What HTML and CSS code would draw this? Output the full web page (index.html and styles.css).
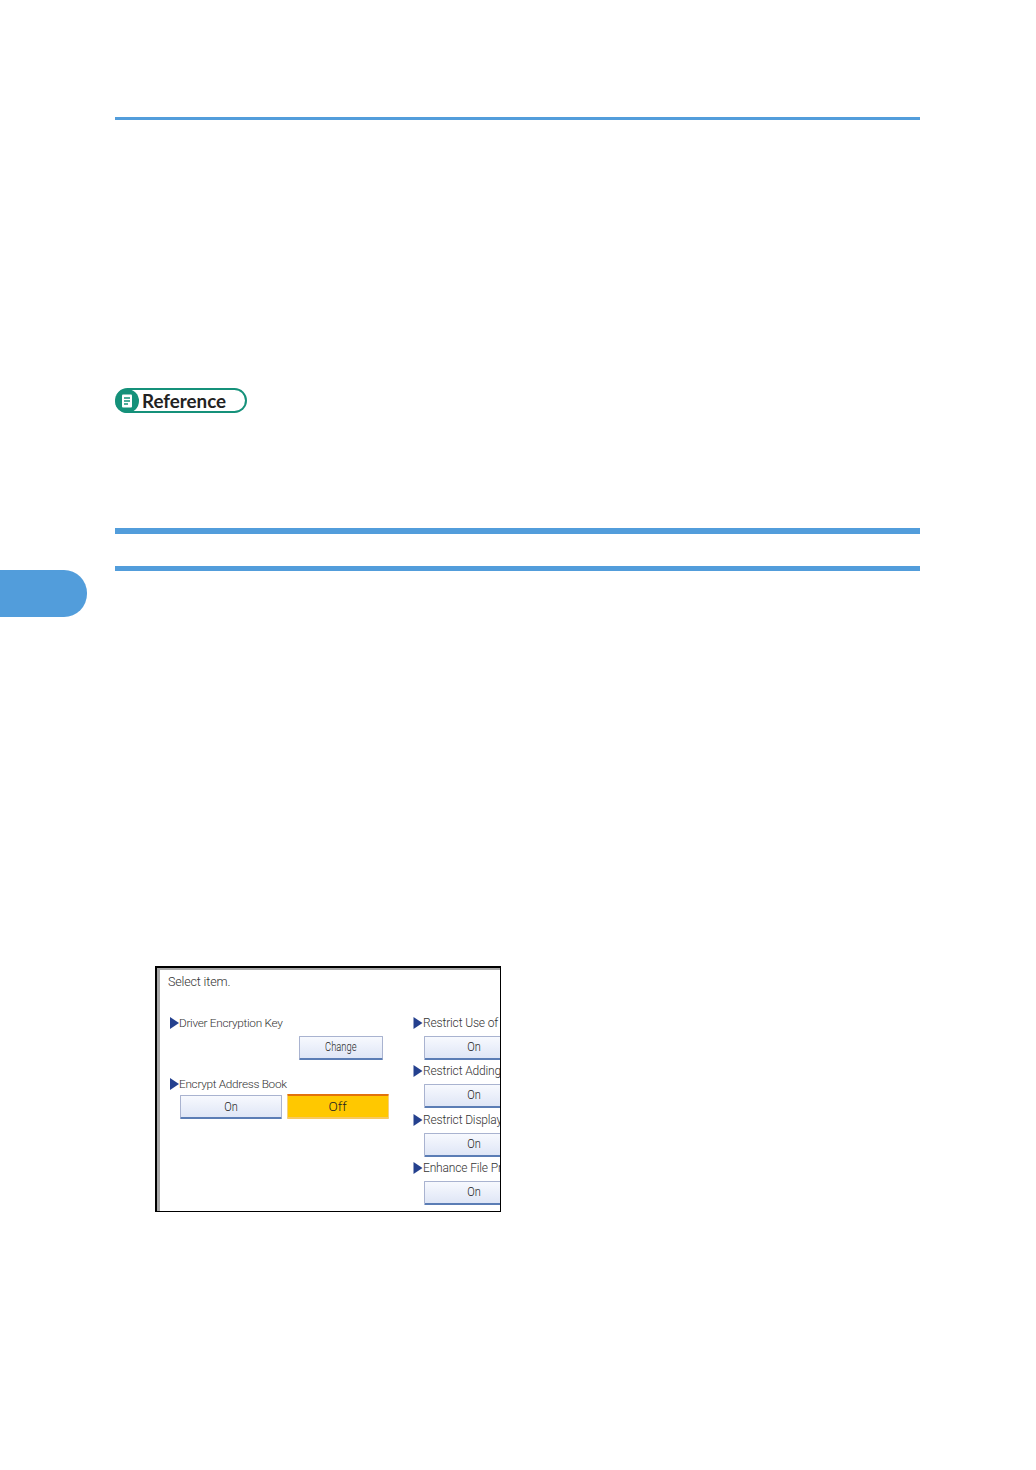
FILE: index.html
```html
<!DOCTYPE html>
<html lang="en">
<head>
<meta charset="utf-8">
<title>Reference</title>
<link rel="stylesheet" href="styles.css">
</head>
<body>
<div class="side-tab"></div>
<main class="page">
  <div class="rule-top"></div>
  <div class="reference">
    <span class="ref-icon">
      <svg viewBox="0 0 24 24" width="24" height="24"><circle cx="12" cy="12" r="12" fill="#15917a"/><rect x="7" y="5.5" width="10" height="13" rx="1" fill="#fff"/><path d="M9 9h6M9 12h6M9 15h4" stroke="#15917a" stroke-width="1.6"/></svg>
    </span>
    <span class="ref-text">Reference</span>
  </div>
  <div class="section-head"></div>
  <div class="screen">
    <div class="col-left">
      <div class="title">Select item.</div>
      <div class="label">
        <svg class="arrow" viewBox="0 0 9 12" width="9" height="12"><path d="M0 0L9 6L0 12Z"/></svg>Driver Encryption Key
      </div>
      <div class="row-end"><button class="btn btn-change"><span class="cap cap-narrow">Change</span></button></div>
      <div class="label label-encrypt">
        <svg class="arrow" viewBox="0 0 9 12" width="9" height="12"><path d="M0 0L9 6L0 12Z"/></svg>Encrypt Address Book
      </div>
      <div class="pair">
        <button class="btn btn-half"><span class="cap">On</span></button>
        <button class="btn btn-half btn-active"><span class="cap cap-wide">Off</span></button>
      </div>
    </div>
    <div class="col-right">
      <div class="label"><svg class="arrow" viewBox="0 0 9 12" width="10" height="12"><path d="M0 0L9 6L0 12Z"/></svg>Restrict Use of</div>
      <button class="btn btn-clip"><span class="cap">On</span></button>
      <div class="label"><svg class="arrow" viewBox="0 0 9 12" width="10" height="12"><path d="M0 0L9 6L0 12Z"/></svg>Restrict Adding</div>
      <button class="btn btn-clip"><span class="cap">On</span></button>
      <div class="label"><svg class="arrow" viewBox="0 0 9 12" width="10" height="12"><path d="M0 0L9 6L0 12Z"/></svg>Restrict Display</div>
      <button class="btn btn-clip"><span class="cap">On</span></button>
      <div class="label"><svg class="arrow" viewBox="0 0 9 12" width="10" height="12"><path d="M0 0L9 6L0 12Z"/></svg>Enhance File Pro</div>
      <button class="btn btn-clip"><span class="cap">On</span></button>
    </div>
  </div>
</main>
</body>
</html>
```
FILE: styles.css
```css
html, body {
  margin: 0;
  padding: 0;
  background: #fff;
}
body {
  position: relative;
  width: 1036px;
  height: 1470px;
  overflow: hidden;
  font-family: Roboto, "Liberation Sans", sans-serif;
}
.side-tab {
  position: absolute;
  left: 0;
  top: 570px;
  width: 87px;
  height: 47px;
  background: #529ddb;
  border-radius: 0 23px 23px 0;
}
.page {
  display: flex;
  flex-direction: column;
  align-items: flex-start;
  width: 805px;
  padding: 117px 0 0 115px;
}
.rule-top {
  width: 100%;
  height: 3px;
  background: #529ddb;
}
.reference {
  display: flex;
  align-items: center;
  box-sizing: border-box;
  width: 132px;
  height: 25px;
  margin-top: 268px;
  border: 2px solid #15917a;
  border-left: 0;
  border-radius: 13px;
}
.ref-icon {
  display: flex;
  margin: 0 3px 0 0;
}
.ref-text {
  font-family: Lato, "Open Sans", sans-serif;
  font-weight: 700;
  font-size: 18.8px;
  line-height: 22px;
  color: #222;
}
.section-head {
  box-sizing: border-box;
  width: 100%;
  height: 43px;
  margin-top: 115px;
  border-top: 6px solid #529ddb;
  border-bottom: 5px solid #529ddb;
}
.screen {
  display: flex;
  box-sizing: border-box;
  width: 346px;
  height: 246px;
  margin: 395px 0 0 40px;
  overflow: hidden;
  background: #fff;
  border: 1px solid #000;
  border-width: 2px 1px 1px 2px;
  box-shadow: inset 3px 2px 0 #a8a8a8;
  color: #333;
}
.col-left {
  display: flex;
  flex-direction: column;
  flex: none;
  width: 255px;
  padding: 6px 0 0 11px;
  box-sizing: border-box;
}
.title {
  height: 15px;
  font-size: 12.5px;
  font-weight: 300;
  line-height: 15px;
  letter-spacing: -0.15px;
}
.label {
  display: flex;
  align-items: center;
  flex: none;
  box-sizing: border-box;
  height: 25px;
  padding-bottom: 1px;
  font-size: 11.8px;
  font-weight: 300;
  letter-spacing: -0.3px;
  white-space: nowrap;
  color: #333;
}
.arrow {
  flex: none;
  margin-left: 2px;
  fill: #24408e;
}
.col-left > .title + .label {
  margin-top: 22px;
}
.col-right > .label {
  font-size: 12px;
  letter-spacing: -0.15px;
}
.row-end {
  display: flex;
  justify-content: flex-end;
  width: 215px;
}
.label-encrypt {
  margin-top: 12px;
}
.pair {
  display: flex;
  gap: 5px;
  margin-left: 12px;
  margin-top: -2px;
}
.col-right {
  display: flex;
  flex-direction: column;
  flex: none;
  width: 100px;
  padding-top: 43px;
  margin-left: -1px;
  box-sizing: border-box;
}
.btn {
  box-sizing: border-box;
  flex: none;
  height: 24px;
  padding: 0 0 2px;
  border: 1px solid #a9b3d0;
  border-bottom: 2px solid #5b7db5;
  border-radius: 1px;
  background: linear-gradient(#f7f9fe, #dfe6f6);
  font-family: Roboto, "Liberation Sans", sans-serif;
  font-size: 13px;
  font-weight: 300;
  color: #222;
}
.cap {
  display: inline-block;
  transform: scaleX(0.85);
}
.cap-narrow {
  transform: scaleX(0.72);
}
.cap-wide {
  transform: scaleX(1.05);
}
.btn-change {
  width: 84px;
}
.btn-half {
  width: 102px;
  padding-bottom: 0;
}
.btn-active {
  height: 25px;
  margin-top: -1px;
  border: 1px solid #f6cf7c;
  border-top: 2px solid #e2720c;
  border-bottom: 2px solid #f7c860;
  background: #ffc800;
}
.btn-clip {
  width: 102px;
  margin-left: 13px;
  margin-bottom: -0.67px;
  padding-right: 3px;
  border-right: 0;
}
```
